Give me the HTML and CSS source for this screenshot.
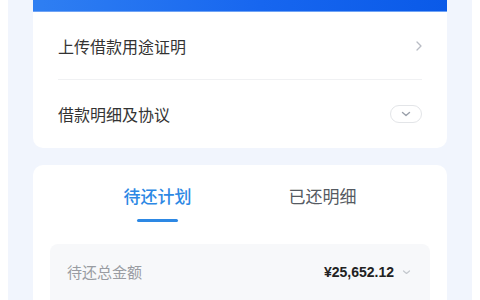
FILE: index.html
```html
<!DOCTYPE html>
<html>
<head>
<meta charset="utf-8">
<link rel="stylesheet" href="styles.css">
</head>
<body>
<div class="page">
  <section class="card card-top">
    <div class="banner"></div>
    <div class="row row-divided">
      <span class="row-label">上传借款用途证明</span>
      <svg class="chev-right" width="6" height="10" viewBox="0 0 6 10"><path d="M1 1l4 4-4 4" fill="none" stroke="#b8bcc4" stroke-width="1.3" stroke-linecap="round" stroke-linejoin="round"/></svg>
    </div>
    <div class="row">
      <span class="row-label">借款明细及协议</span>
      <span class="pill">
        <svg width="10" height="6" viewBox="0 0 10 6"><path d="M1.5 1.5l3.5 3 3.5-3" fill="none" stroke="#9aa0aa" stroke-width="1.4" stroke-linecap="round" stroke-linejoin="round"/></svg>
      </span>
    </div>
  </section>
  <section class="card card-plan">
    <div class="tabs">
      <div class="tab tab-active"><span>待还计划</span><i class="tab-bar"></i></div>
      <div class="tab"><span>已还明细</span></div>
    </div>
    <div class="summary">
      <span class="summary-label">待还总金额</span>
      <span class="summary-value">¥25,652.12
        <svg width="9" height="6" viewBox="0 0 9 6"><path d="M1.5 2l3 2.5 3-2.5" fill="none" stroke="#c4c8ce" stroke-width="1.2" stroke-linecap="round" stroke-linejoin="round"/></svg>
      </span>
    </div>
  </section>
</div>
</body>
</html>
```
FILE: styles.css
```css
html, body {
  margin: 0;
  padding: 0;
  background: #ffffff;
}
body {
  font-family: "Noto Sans CJK SC", "Noto Sans", sans-serif;
  height: 300px;
  overflow: hidden;
}
.page {
  margin: 0 8px;
  height: 300px;
  background: #f1f5fd;
  padding: 0 25px;
  display: flex;
  flex-direction: column;
  gap: 17px;
}
.card {
  background: #ffffff;
  border-radius: 10px;
}
.card-top {
  flex-shrink: 0;
  border-radius: 0 0 10px 10px;
  overflow: hidden;
}
.banner {
  height: 12px;
  background: linear-gradient(90deg, #2f7ff2 0%, #1766ef 55%, #0a5ae8 100%);
  border-bottom: 1px solid #6fa3f5;
  box-sizing: border-box;
}
.row {
  height: 68px;
  margin: 0 25px;
  display: flex;
  align-items: center;
  justify-content: space-between;
  box-sizing: border-box;
}
.row-divided {
  border-bottom: 1px solid #f0f1f3;
}
.row-label {
  font-size: 16px;
  color: #333333;
}
.pill {
  width: 30px;
  height: 16px;
  border: 1px solid #e3e5e8;
  border-radius: 9px;
  display: flex;
  align-items: center;
  justify-content: center;
}
.card-plan {
  flex: 1 0 auto;
  padding: 0 17px;
  border-radius: 10px 10px 0 0;
}
.tabs {
  display: flex;
  margin: 0 25px;
  height: 79px;
}
.tab {
  flex: 1;
  display: flex;
  flex-direction: column;
  align-items: center;
  padding-top: 19px;
  box-sizing: border-box;
  font-size: 17px;
  color: #555a62;
}
.tab span {
  line-height: 24px;
}
.tab-active {
  color: #2d88e4;
  font-weight: 500;
}
.tab-bar {
  display: block;
  width: 41px;
  height: 3px;
  border-radius: 2px;
  background: #2d88e4;
  margin-top: 11px;
}
.summary {
  background: #f7f8fa;
  border-radius: 8px 8px 0 0;
  height: 70px;
  padding: 0 19px 0 17px;
  display: flex;
  align-items: flex-start;
  justify-content: space-between;
}
.summary-label {
  margin-top: 18px;
  font-size: 15px;
  color: #999ca2;
  line-height: 20px;
}
.summary-value {
  margin-top: 18px;
  font-family: "Liberation Sans", "Noto Sans CJK SC", sans-serif;
  font-weight: 700;
  font-size: 14px;
  color: #222222;
  line-height: 20px;
  display: flex;
  align-items: center;
  gap: 8px;
}
```
